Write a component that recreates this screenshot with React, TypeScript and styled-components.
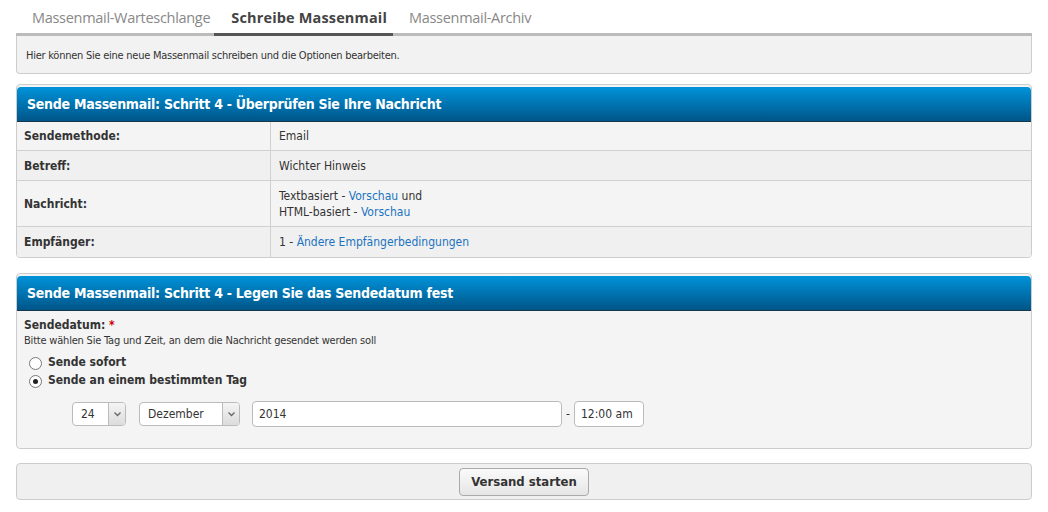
import React from 'react';
import styled, { createGlobalStyle } from 'styled-components';

const GlobalStyle = createGlobalStyle`
  html, body {
    margin: 0;
    padding: 0;
    background: #fff;
    font-family: "DejaVu Sans Condensed", "Liberation Sans", sans-serif;
    color: #333;
  }
`;

const Page = styled.div`
  width: 1016px;
  padding: 0 16px;
`;

const Tabs = styled.div`
  display: flex;
  border-bottom: 3px solid #bbb;
  border-radius: 3px 3px 0 0;
  height: 33px;
`;

const Tab = styled.div<{ $active?: boolean }>`
  font-family: "Open Sans", sans-serif;
  font-size: 14.5px;
  padding: 0 ${(p) => (p.$active ? 6 : 4)}px 0 ${(p) => (p.$active ? 17 : 16)}px;
  line-height: 36px;
  margin-bottom: -3px;
  color: ${(p) => (p.$active ? '#444' : '#888')};
  font-weight: ${(p) => (p.$active ? 700 : 400)};
  border-bottom: 3px solid ${(p) => (p.$active ? '#555' : 'transparent')};
  letter-spacing: ${(p) => (p.$active ? '0.15px' : '-0.3px')};
`;

const InfoBox = styled.div`
  background: #f2f2f2;
  border: 1px solid #ccc;
  border-top: none;
  border-radius: 0 0 4px 4px;
  font-size: 11px;
  letter-spacing: -0.25px;
  padding: 13px 9px 11px;
  color: #333;
`;

const Panel = styled.div<{ $gap?: number }>`
  margin-top: ${(p) => p.$gap ?? 10}px;
  border: 1px solid #ccc;
  border-radius: 4px;
  padding: 2px 0 0;
  background: #f4f4f4;
  overflow: hidden;
`;

const PanelHeader = styled.div`
  height: 34px;
  line-height: 34px;
  background: linear-gradient(#0093da, #005588);
  border-bottom: 1px solid #17384c;
  border-radius: 4px 4px 0 0;
  color: #fff;
  font-weight: bold;
  font-size: 14px;
  letter-spacing: -0.27px;
  padding-left: 10px;
`;

const Table = styled.div`
  display: grid;
  grid-template-columns: 254px 1fr;
  font-size: 12px;
`;

const Cell = styled.div<{ $alt?: boolean; $label?: boolean; $h: number; $last?: boolean }>`
  box-sizing: border-box;
  height: ${(p) => p.$h}px;
  display: flex;
  flex-direction: column;
  justify-content: center;
  background: ${(p) => (p.$alt ? '#f0f0f0' : '#f4f4f4')};
  border-bottom: ${(p) => (p.$last ? 'none' : '1px solid #d0d0d0')};
  padding-left: ${(p) => (p.$label ? 7 : 8)}px;
  font-weight: ${(p) => (p.$label ? 'bold' : 'normal')};
  border-right: ${(p) => (p.$label ? '1px solid #d0d0d0' : 'none')};
  line-height: 16px;
`;

const Link = styled.a`
  color: #1a73c0;
  text-decoration: none;
`;

const FormBody = styled.div`
  padding: 7px 7px 21px;
`;

const FieldLabel = styled.div`
  font-weight: bold;
  font-size: 12px;
  line-height: 14px;
`;

const Required = styled.span`
  color: #c00;
`;

const Hint = styled.div`
  font-size: 11px;
  letter-spacing: -0.2px;
  line-height: 17px;
`;

const RadioGroup = styled.div`
  margin-top: 4px;
`;

const RadioRow = styled.label`
  display: flex;
  align-items: center;
  gap: 6px;
  font-weight: bold;
  font-size: 12px;
  line-height: 18px;
  padding-left: 5px;
`;

const Radio = styled.span<{ $checked?: boolean }>`
  width: 11px;
  height: 11px;
  border-radius: 50%;
  border: 1px solid #777;
  background: #fff;
  display: inline-flex;
  align-items: center;
  justify-content: center;
  margin-top: 3px;
  &::after {
    content: '';
    width: 5px;
    height: 5px;
    border-radius: 50%;
    background: ${(p) => (p.$checked ? '#222' : 'transparent')};
  }
`;

const Controls = styled.div`
  display: flex;
  align-items: center;
  padding-left: 48px;
  margin-top: 12px;
  font-size: 12px;
`;

const SelectBox = styled.div<{ $w: number; $gap: number }>`
  width: ${(p) => p.$w}px;
  height: 24px;
  margin-right: ${(p) => p.$gap}px;
  border: 1px solid #bbb;
  border-radius: 4px;
  background: #fff;
  display: flex;
  align-items: stretch;
  box-sizing: border-box;
  overflow: hidden;
`;

const SelectValue = styled.div`
  flex: 1;
  padding-left: 8px;
  line-height: 22px;
`;

const SelectArrow = styled.div`
  width: 16px;
  border-left: 1px solid #bbb;
  background: linear-gradient(#f4f4f4, #dcdcdc);
  display: flex;
  align-items: center;
  justify-content: center;
`;

const TextInput = styled.div<{ $w: number }>`
  width: ${(p) => p.$w}px;
  height: 26px;
  box-sizing: border-box;
  border: 1px solid #bbb;
  border-radius: 4px;
  background: #fff;
  line-height: 24px;
  padding-left: 6px;
`;

const Dash = styled.span`
  width: 12px;
  text-align: center;
`;

const ActionBar = styled.div`
  margin-top: 14px;
  border: 1px solid #ccc;
  border-radius: 4px;
  background: #f0f0f0;
  height: 35px;
  display: flex;
  align-items: center;
  justify-content: center;
`;

const Button = styled.button`
  font-family: inherit;
  font-weight: bold;
  font-size: 13px;
  color: #333;
  height: 28px;
  padding: 0 11px;
  border: 1px solid #aaa;
  border-radius: 4px;
  background: linear-gradient(#fafafa, #e6e6e6);
`;

const Arrow = () => (
  <svg width="7" height="5" viewBox="0 0 7 5">
    <path d="M0.5 0.5 L3.5 3.5 L6.5 0.5" fill="none" stroke="#666" strokeWidth="1.3" />
  </svg>
);

const rows = [
  { label: 'Sendemethode:', h: 29, value: <>Email</> },
  { label: 'Betreff:', h: 30, value: <>Wichter Hinweis</> },
  {
    label: 'Nachricht:',
    h: 46,
    value: (
      <>
        <div>
          Textbasiert - <Link>Vorschau</Link> und
        </div>
        <div>
          HTML-basiert - <Link>Vorschau</Link>
        </div>
      </>
    ),
  },
  {
    label: 'Empfänger:',
    h: 30,
    value: (
      <>
        <div>
          1 - <Link>Ändere Empfängerbedingungen</Link>
        </div>
      </>
    ),
  },
];

export default function App() {
  return (
    <Page>
      <GlobalStyle />
      <Tabs>
        <Tab>Massenmail-Warteschlange</Tab>
        <Tab $active>Schreibe Massenmail</Tab>
        <Tab>Massenmail-Archiv</Tab>
      </Tabs>
      <InfoBox>Hier können Sie eine neue Massenmail schreiben und die Optionen bearbeiten.</InfoBox>

      <Panel>
        <PanelHeader>Sende Massenmail: Schritt 4 - Überprüfen Sie Ihre Nachricht</PanelHeader>
        <Table>
          {rows.map((r, i) => (
            <React.Fragment key={r.label}>
              <Cell $label $h={r.h} $alt={i % 2 === 1} $last={i === rows.length - 1}>
                {r.label}
              </Cell>
              <Cell $h={r.h} $alt={i % 2 === 1} $last={i === rows.length - 1}>
                {r.value}
              </Cell>
            </React.Fragment>
          ))}
        </Table>
      </Panel>

      <Panel $gap={15}>
        <PanelHeader>Sende Massenmail: Schritt 4 - Legen Sie das Sendedatum fest</PanelHeader>
        <FormBody>
          <FieldLabel>
            Sendedatum: <Required>*</Required>
          </FieldLabel>
          <Hint>Bitte wählen Sie Tag und Zeit, an dem die Nachricht gesendet werden soll</Hint>
          <RadioGroup>
            <RadioRow>
              <Radio /> Sende sofort
            </RadioRow>
            <RadioRow>
              <Radio $checked /> Sende an einem bestimmten Tag
            </RadioRow>
          </RadioGroup>
          <Controls>
            <SelectBox $w={54} $gap={13}>
              <SelectValue>24</SelectValue>
              <SelectArrow>
                <Arrow />
              </SelectArrow>
            </SelectBox>
            <SelectBox $w={101} $gap={12}>
              <SelectValue>Dezember</SelectValue>
              <SelectArrow>
                <Arrow />
              </SelectArrow>
            </SelectBox>
            <TextInput $w={310}>2014</TextInput>
            <Dash>-</Dash>
            <TextInput $w={70}>12:00 am</TextInput>
          </Controls>
        </FormBody>
      </Panel>

      <ActionBar>
        <Button>Versand starten</Button>
      </ActionBar>
    </Page>
  );
}
